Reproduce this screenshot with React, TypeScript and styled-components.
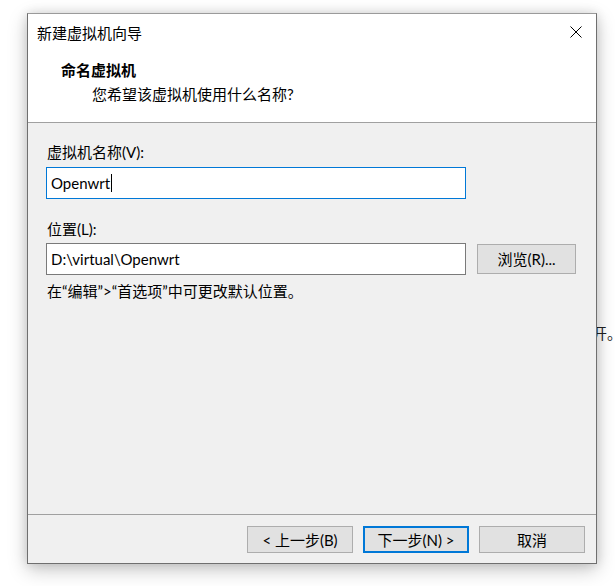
import React from 'react';
import styled, { createGlobalStyle } from 'styled-components';

const GlobalStyle = createGlobalStyle`
  html, body {
    margin: 0;
    padding: 0;
    background: #ffffff;
  }
  * {
    box-sizing: border-box;
  }
`;

const FONT = `"Lato", "Noto Sans CJK SC", sans-serif`;

const Desktop = styled.div`
  position: relative;
  width: 615px;
  height: 586px;
  overflow: hidden;
  background: #ffffff;
  font-family: ${FONT};
  font-size: 15px;
  color: #000000;
`;

// text of the window underneath, peeking out at the right
const BehindText = styled.div`
  position: absolute;
  left: 592px;
  top: 323px;
  line-height: 20px;
  color: #222;
  white-space: nowrap;
`;

const Window = styled.div`
  position: absolute;
  left: 27px;
  top: 13px;
  width: 570px;
  height: 551px;
  display: flex;
  flex-direction: column;
  background: #f0f0f0;
  border: 1px solid #6f6f6f;
  border-top-color: #9a9a9a;
  box-shadow: 0 6px 18px rgba(0, 0, 0, 0.22), 0 0 10px rgba(0, 0, 0, 0.12);
`;

const Header = styled.div`
  height: 109px;
  flex: none;
  background: #ffffff;
  border-bottom: 1px solid #a0a0a0;
`;

const TitleBar = styled.div`
  height: 38px;
  display: flex;
  align-items: center;
  justify-content: space-between;
  padding: 0 14px 0 9px;
`;

const TitleText = styled.span`
  line-height: 20px;
`;

const CloseButton = styled.div`
  width: 12px;
  height: 12px;
  display: flex;
  margin-top: -2px;
`;

const Heading = styled.div`
  margin-top: 8px;
  padding-left: 33px;
  line-height: 20px;
  font-weight: bold;
`;

const SubHeading = styled.div`
  margin-top: 4px;
  padding-left: 64px;
  line-height: 20px;
`;

const Body = styled.div`
  flex: 1;
  padding: 19px 0 0 18px;
  border-bottom: 1px solid #a0a0a0;
`;

const FieldLabel = styled.div<{ $gap?: number }>`
  margin-top: ${(p) => p.$gap ?? 0}px;
  padding-left: 1px;
  line-height: 20px;
`;

const Row = styled.div<{ $gap: number }>`
  margin-top: ${(p) => p.$gap}px;
  display: flex;
  align-items: center;
  gap: 11px;
`;

const TextBox = styled.div<{ $focused?: boolean }>`
  width: 420px;
  height: 32px;
  display: flex;
  align-items: center;
  padding-left: 4px;
  background: #ffffff;
  border: 1px solid ${(p) => (p.$focused ? '#0078d7' : '#7a7a7a')};
  line-height: 20px;
  white-space: nowrap;
`;

const Caret = styled.span`
  display: inline-block;
  width: 1px;
  height: 18px;
  background: #000;
  margin-left: 1px;
`;

const Button = styled.div<{ $default?: boolean; $width: number; $height: number }>`
  width: ${(p) => p.$width}px;
  height: ${(p) => p.$height}px;
  display: flex;
  align-items: center;
  justify-content: center;
  background: #e1e1e1;
  border: ${(p) => (p.$default ? '2px solid #0078d7' : '1px solid #adadad')};
  line-height: 20px;
  white-space: nowrap;
`;

const Hint = styled.div`
  margin-top: 6px;
  padding-left: 1px;
  line-height: 20px;
`;

const Footer = styled.div`
  height: 48px;
  flex: none;
  display: flex;
  justify-content: flex-end;
  align-items: flex-start;
  gap: 10px;
  padding: 11px 11px 0 0;
`;

const CloseIcon = () => (
  <svg width="12" height="12" viewBox="0 0 12 12">
    <path d="M0.5 0.5 L11.5 11.5 M11.5 0.5 L0.5 11.5" stroke="#000" strokeWidth="1" fill="none" />
  </svg>
);

export default function App() {
  return (
    <Desktop>
      <GlobalStyle />
      <BehindText>开。</BehindText>
      <Window>
        <Header>
          <TitleBar>
            <TitleText>新建虚拟机向导</TitleText>
            <CloseButton>
              <CloseIcon />
            </CloseButton>
          </TitleBar>
          <Heading>命名虚拟机</Heading>
          <SubHeading>您希望该虚拟机使用什么名称?</SubHeading>
        </Header>
        <Body>
          <FieldLabel>虚拟机名称(V):</FieldLabel>
          <Row $gap={5}>
            <TextBox $focused>
              Openwrt
              <Caret />
            </TextBox>
          </Row>
          <FieldLabel $gap={20}>位置(L):</FieldLabel>
          <Row $gap={4}>
            <TextBox>D:\virtual\Openwrt</TextBox>
            <Button $width={99} $height={30}>
              浏览(R)...
            </Button>
          </Row>
          <Hint>在“编辑”&gt;“首选项”中可更改默认位置。</Hint>
        </Body>
        <Footer>
          <Button $width={106} $height={27}>
            &lt; 上一步(B)
          </Button>
          <Button $width={106} $height={27} $default>
            下一步(N) &gt;
          </Button>
          <Button $width={106} $height={27}>
            取消
          </Button>
        </Footer>
      </Window>
    </Desktop>
  );
}
